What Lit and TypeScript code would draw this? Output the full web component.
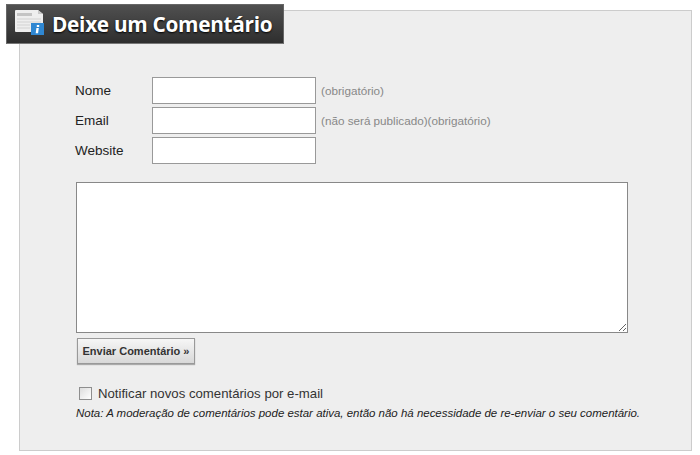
import { css, html, LitElement } from "lit";
import { customElement } from "lit/decorators.js";

const FIELDS = [
  { label: "Nome", hint: "(obrigatório)" },
  { label: "Email", hint: "(não será publicado)(obrigatório)" },
  { label: "Website", hint: "" },
];

@customElement("app-root")
export class AppRoot extends LitElement {
  static styles = css`
    :host {
      display: block;
      width: 700px;
      height: 455px;
      background: #fff;
      font-family: Arial, "Liberation Sans", sans-serif;
      overflow: hidden;
    }
    .wrap {
      position: relative;
      padding: 10px 8px 4px 19px;
    }
    .panel {
      box-sizing: border-box;
      height: 441px;
      background: #eee;
      border: 1px solid #ccc;
      padding: 66px 62px 0 56px;
    }
    .badge {
      position: absolute;
      left: 6px;
      top: 4px;
      box-sizing: border-box;
      width: 278px;
      height: 40px;
      display: flex;
      align-items: center;
      gap: 8px;
      padding-left: 8px;
      background: linear-gradient(#505050, #2e2e2e);
      border: 1px solid #666;
      border-bottom-color: #777;
    }
    .badge svg {
      flex: none;
      margin-bottom: 3px;
    }
    .badge span {
      color: #fff;
      font: 700 20.8px "Open Sans", sans-serif;
      letter-spacing: -0.3px;
      white-space: nowrap;
      text-shadow: 0 1px 2px #000;
    }
    .row {
      display: flex;
      align-items: center;
      height: 27px;
      margin-bottom: 3px;
    }
    label {
      width: 77px;
      margin-left: -1px;
      font-size: 13.5px;
      color: #222;
    }
    input[type="text"] {
      box-sizing: border-box;
      width: 164px;
      height: 27px;
      margin: 0;
      background: #fff;
      border: 1px solid #999;
      border-radius: 0;
    }
    .hint {
      margin-left: 5px;
      font-size: 11.7px;
      color: #888;
    }
    textarea {
      display: block;
      box-sizing: border-box;
      width: 552px;
      height: 151px;
      margin: 18px 0 0;
      background: #fff;
      border: 1px solid #888;
      border-radius: 0;
    }
    button {
      display: block;
      box-sizing: border-box;
      width: 118px;
      height: 26px;
      margin: 5px 0 0 1px;
      padding: 0;
      font: 700 11px Arial, "Liberation Sans", sans-serif;
      color: #333;
      white-space: nowrap;
      background: linear-gradient(#f6f6f6, #d8d8d8);
      border: 1px solid #999;
      box-shadow: 0 1px 1px #aaa;
    }
    .notify {
      display: flex;
      align-items: center;
      margin: 21px 0 0 3px;
      height: 16px;
      font-size: 13.2px;
      color: #333;
    }
    .box {
      box-sizing: border-box;
      width: 13px;
      height: 13px;
      margin-right: 6px;
      background: linear-gradient(135deg, #ddd, #fff);
      border: 1px solid #8e8e8e;
    }
    .note {
      margin: 6px 0 0;
      font-size: 11.47px;
      font-style: italic;
      color: #222;
      white-space: nowrap;
    }
  `;

  render() {
    return html`
      <div class="wrap">
        <div class="panel">
          ${FIELDS.map(
            (f) => html`
              <div class="row">
                <label>${f.label}</label>
                <input type="text" />
                ${f.hint ? html`<span class="hint">${f.hint}</span>` : ""}
              </div>
            `
          )}
          <textarea></textarea>
          <button>Enviar Comentário »</button>
          <div class="notify">
            <span class="box"></span>
            <span>Notificar novos comentários por e-mail</span>
          </div>
          <p class="note">
            Nota: A moderação de comentários pode estar ativa, então não há necessidade de re-enviar o seu comentário.
          </p>
        </div>
        <div class="badge">
          <svg width="29" height="25" viewBox="0 0 29 25">
            <path d="M1 0h22l5 4v17a1 1 0 0 1-1 1H1a1 1 0 0 1-1-1V1a1 1 0 0 1 1-1z" fill="#eee" />
            <path d="M23 0l5 4h-5z" fill="#c9c9c9" />
            <path d="M2 3h15v3H2z" fill="#c4c4c4" />
            <path d="M2 9h24M2 12h24M2 15h13M2 18h13" stroke="#d2d2d2" stroke-width="1" />
            <rect x="16" y="13" width="13" height="12" fill="#2f87d2" />
            <path d="M21.8 15h2.4v2h-2.4zM21.4 18h2.4l-.7 5.2h-2.4z" fill="#fff" />
          </svg>
          <span>Deixe um Comentário</span>
        </div>
      </div>
    `;
  }
}
